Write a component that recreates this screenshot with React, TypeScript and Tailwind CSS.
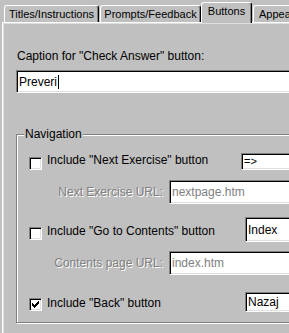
import React from "react";

const sunken =
  "border border-t-[#808080] border-l-[#808080] border-b-white border-r-white shadow-[inset_1px_1px_0_#000,inset_-1px_-1px_0_#dfdfdf] bg-white";

function Tab({ label, width, selected }: { label: string; width: string; selected?: boolean }) {
  if (selected) {
    return (
      <div
        className={`${width} relative z-10 -mb-px flex h-[21px] justify-center rounded-t-[3px] border-l border-t border-r border-l-white border-t-white border-r-black bg-[#c0c0c0] pt-[2px] leading-[13px] shadow-[inset_-1px_0_0_#808080]`}
      >
        {label}
      </div>
    );
  }
  return (
    <div
      className={`${width} flex h-[17px] shrink-0 justify-center overflow-hidden rounded-t-[3px] border-l border-t border-r border-l-white border-t-white border-r-black pt-[2px] leading-[13px] shadow-[inset_-1px_0_0_#808080]`}
    >
      {label}
    </div>
  );
}

function CheckBox({ checked }: { checked?: boolean }) {
  return (
    <div className={`${sunken} flex h-[13px] w-[13px] shrink-0 items-center justify-center`}>
      {checked && (
        <svg width="7" height="7" viewBox="0 0 7 7" shapeRendering="crispEdges">
          <path d="M6 0h1v3h-1v1h-1v1h-1v1h-1v1h-1v-1h-1v-1h-1v-3h1v1h1v1h1v-1h1v-1h1z" fill="#000" />
        </svg>
      )}
    </div>
  );
}

function UrlRow({ label, value }: { label: string; value: string }) {
  return (
    <div className="flex items-center">
      <div className="w-[146px] text-right leading-[14px] text-[#808080] [text-shadow:1px_1px_0_#ffffff]">{label}</div>
      <div className={`${sunken} ml-[6px] flex h-[24px] w-[140px] shrink-0 items-center pl-[2px] text-[#808080]`}>
        {value}
      </div>
    </div>
  );
}

export default function App() {
  return (
    <div className="h-[333px] w-[289px] overflow-hidden bg-[#c0c0c0] font-['Liberation_Sans',Arial,sans-serif] text-[12px] text-black">
      <div className="flex h-[22px] items-end whitespace-nowrap pl-[4px] text-[11px]">
        <Tab label="Titles/Instructions" width="w-[95px]" />
        <div className="w-px shrink-0" />
        <Tab label="Prompts/Feedback" width="w-[101px]" />
        <Tab label="Buttons" width="w-[51px] shrink-0" selected />
        <div className="w-px shrink-0" />
        <div className="flex h-[17px] w-[80px] shrink-0 rounded-tl-[3px] border-l border-t border-white pl-[5px] pt-[2px] leading-[13px]">
          Appearance
        </div>
      </div>

      <div className="ml-[2px] h-[311px] w-[320px] border-l border-t border-white pl-[13px] pt-[26px] shadow-[inset_1px_1px_0_#dfdfdf]">
        <div className="pl-px leading-[14px]">Caption for "Check Answer" button:</div>
        <div className={`${sunken} mt-[7px] flex h-[23px] w-[290px] items-center pl-[2px]`}>
          <span>Preveri</span>
          <span className="ml-px h-[14px] w-px bg-black" />
        </div>

        <div className="relative mt-[41px] h-[189px] w-[300px] border border-[#808080] pl-[12px] pt-[18px] shadow-[1px_1px_0_#ffffff,inset_1px_1px_0_#ffffff]">
          <span className="absolute left-[7px] top-[-8px] bg-[#c0c0c0] px-px leading-[14px]">Navigation</span>

          <div className="flex items-start">
            <div className="mt-[4px]">
              <CheckBox />
            </div>
            <div className="ml-[5px] w-[194px] leading-[14px]">Include "Next Exercise" button</div>
            <div className={`${sunken} flex h-[17px] w-[60px] shrink-0 items-center pl-[2px] text-[11px]`}>=&gt;</div>
          </div>

          <div className="-ml-[12px] mt-[10px]">
            <UrlRow label="Next Exercise URL:" value="nextpage.htm" />
          </div>

          <div className="mt-[13px] flex items-start">
            <div className="mt-[10px]">
              <CheckBox />
            </div>
            <div className="ml-[5px] mt-[7px] w-[198px] leading-[14px]">Include "Go to Contents" button</div>
            <div className={`${sunken} flex h-[25px] w-[60px] shrink-0 items-center pl-[2px]`}>Index</div>
          </div>

          <div className="-ml-[12px] mt-[9px]">
            <UrlRow label="Contents page URL:" value="index.htm" />
          </div>

          <div className="mt-[17px] flex items-start">
            <div className="mt-[6px]">
              <CheckBox checked />
            </div>
            <div className="ml-[5px] mt-[4px] w-[198px] leading-[14px]">Include "Back" button</div>
            <div className={`${sunken} flex h-[20px] w-[60px] shrink-0 items-center pl-[2px]`}>Nazaj</div>
          </div>
        </div>
      </div>
    </div>
  );
}
